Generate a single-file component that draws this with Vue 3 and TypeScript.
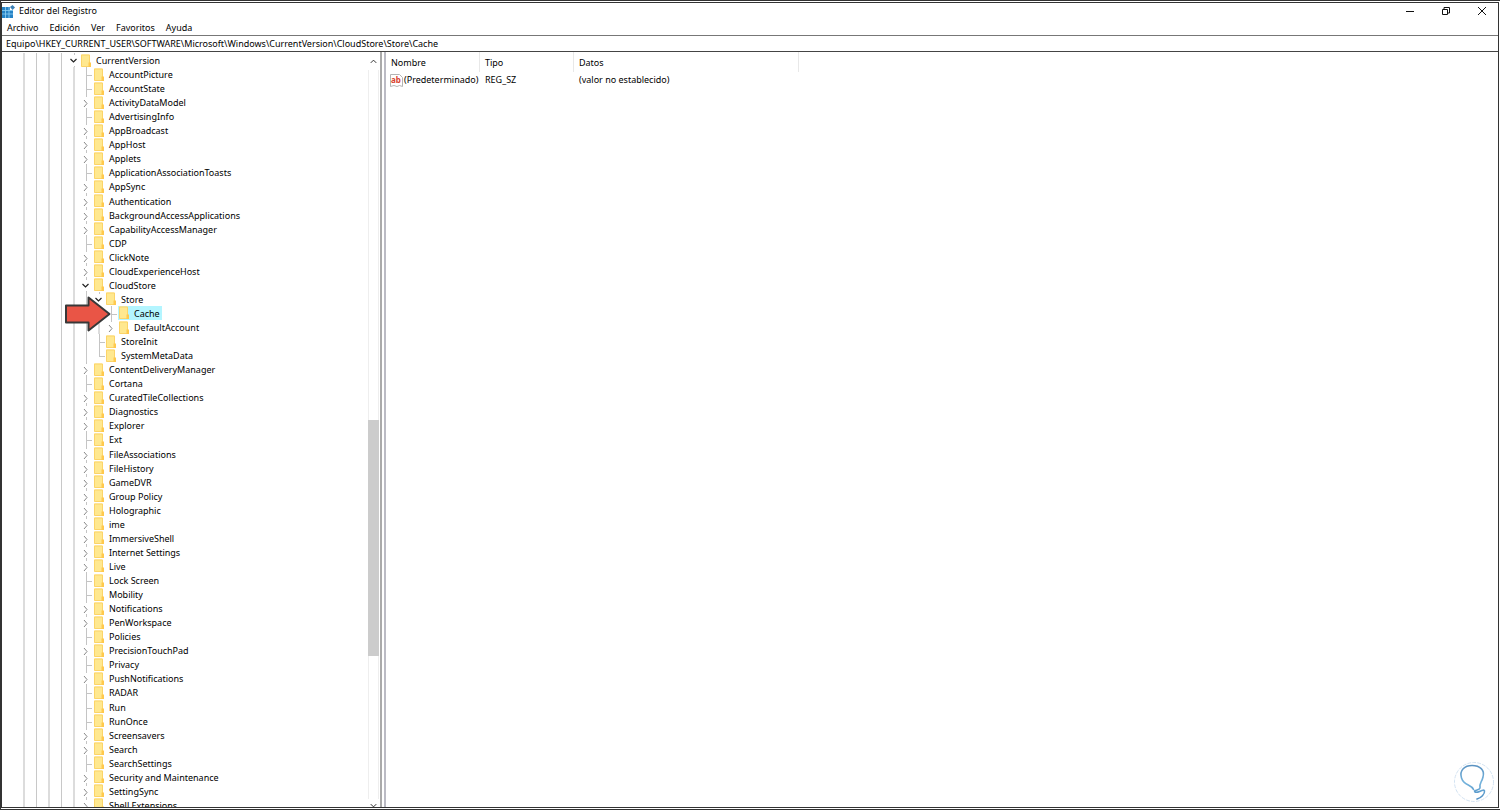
<script setup lang="ts">
type Kind = 'open' | 'closed' | 'leaf'
interface Key { name: string; level: number; kind: Kind; last?: boolean; selected?: boolean }

const menus = ['Archivo', 'Edición', 'Ver', 'Favoritos', 'Ayuda']
const path = 'Equipo\\HKEY_CURRENT_USER\\SOFTWARE\\Microsoft\\Windows\\CurrentVersion\\CloudStore\\Store\\Cache'

// A leading "+" marks a collapsed key that has children.
const before = ['AccountPicture', 'AccountState', '+ActivityDataModel', 'AdvertisingInfo', '+AppBroadcast', '+AppHost', '+Applets', 'ApplicationAssociationToasts', '+AppSync', '+Authentication', '+BackgroundAccessApplications', '+CapabilityAccessManager', 'CDP', '+ClickNote', '+CloudExperienceHost']
const after = ['+ContentDeliveryManager', 'Cortana', '+CuratedTileCollections', '+Diagnostics', '+Explorer', 'Ext', '+FileAssociations', '+FileHistory', '+GameDVR', '+Group Policy', '+Holographic', '+ime', '+ImmersiveShell', '+Internet Settings', '+Live', 'Lock Screen', 'Mobility', '+Notifications', '+PenWorkspace', 'Policies', '+PrecisionTouchPad', 'Privacy', '+PushNotifications', 'RADAR', 'Run', 'RunOnce', '+Screensavers', '+Search', 'SearchSettings', '+Security and Maintenance', '+SettingSync', '+Shell Extensions']
const toKey = (s: string): Key => ({ name: s.replace('+', ''), level: 1, kind: s.startsWith('+') ? 'closed' : 'leaf' })

const keys: Key[] = [
  { name: 'CurrentVersion', level: 0, kind: 'open' },
  ...before.map(toKey),
  { name: 'CloudStore', level: 1, kind: 'open' },
  { name: 'Store', level: 2, kind: 'open' },
  { name: 'Cache', level: 3, kind: 'leaf', selected: true },
  { name: 'DefaultAccount', level: 3, kind: 'closed', last: true },
  { name: 'StoreInit', level: 2, kind: 'leaf' },
  { name: 'SystemMetaData', level: 2, kind: 'leaf', last: true },
  ...after.map(toKey),
]
// Ancestor guides drawn to the left of each row
const guides = (k: Key) => 4 + k.level
</script>

<template>
  <div class="frame">
    <div class="window">
      <header class="titlebar">
        <svg class="app-icon" viewBox="0 0 13 13" aria-hidden="true">
          <path d="M0 2H8V5H11V13H0Z" fill="#2683c6" />
          <path d="M0 5.5H11M0 9H11M3.5 2V13M7 2V13" stroke="#8fd0f5" stroke-width=".8" />
          <path d="M8 2L10.5 0L13 2.5L10.5 5Z" fill="#3a7fb5" />
        </svg>
        <h1>Editor del Registro</h1>
        <div class="controls">
          <button type="button" aria-label="Minimizar"><svg viewBox="0 0 10 10"><path d="M1 5.5H9" /></svg></button>
          <button type="button" aria-label="Restaurar"><svg viewBox="0 0 10 10"><path d="M1.5 3.5H6.5V8.5H1.5ZM3 3.5V1.5H8.5V7H6.5" /></svg></button>
          <button type="button" aria-label="Cerrar"><svg viewBox="0 0 10 10"><path d="M1 1L9 9M9 1L1 9" /></svg></button>
        </div>
      </header>
      <nav class="menu"><button v-for="m in menus" :key="m" type="button">{{ m }}</button></nav>
      <input class="address" type="text" aria-label="Ruta" :value="path" />
      <main class="panes">
        <section class="tree-pane">
          <ul class="tree">
            <li v-for="(k, i) in keys" :key="i" class="row">
              <span v-for="g in guides(k)" :key="g" class="cell guide" :class="{ soft: g % 2 === 1 }"></span>
              <span class="cell node" :class="[k.kind, { last: k.last }]">
                <svg v-if="k.kind === 'open'" viewBox="0 0 12 14" class="chev dark"><path d="M2.500 6L5.500 9L8.500 6" /></svg>
                <svg v-else-if="k.kind === 'closed'" viewBox="0 0 12 14" class="chev"><path d="M4 5L7 8.500L4 12" /></svg>
              </span>
              <button type="button" class="label" :class="{ selected: k.selected }">
                <svg class="folder" viewBox="1 0 11 13" aria-hidden="true">
                  <path d="M1 .5H9.5V9H11V12.5H1Z" fill="#ffe88f" />
                  <path d="M1.500 1V12.500H10V9H9.500V1Z" fill="none" stroke="#fcd468" />
                  <path d="M8.500 8.500H11V13H8.500Z" fill="#ffc94d" />
                </svg>
                <span>{{ k.name }}</span>
              </button>
            </li>
          </ul>
          <svg class="pointer" viewBox="0 0 46 36" aria-hidden="true"><path d="M1 9.500H23.500V1.500L44.500 18L23.500 34.500V26.500H1Z" /></svg>
          <div class="scrollbar">
            <button type="button" aria-label="Subir"><svg viewBox="0 0 12 12"><path d="M3 7.500L6 4.500L9 7.500" /></svg></button>
            <div class="track"><div class="space-top"></div><div class="thumb"></div><div class="space-bottom"></div></div>
            <button type="button" class="down" aria-label="Bajar"><svg viewBox="0 0 12 12"><path d="M3 4.500L6 7.500L9 4.500" /></svg></button>
          </div>
        </section>
        <section class="values">
          <table>
            <colgroup><col class="c1" /><col class="c2" /><col class="c3" /><col /></colgroup>
            <thead><tr><th>Nombre</th><th>Tipo</th><th>Datos</th><td></td></tr></thead>
            <tbody><tr>
              <td class="first">
                <div class="name">
                  <svg class="ab" viewBox="0 0 13 13" aria-hidden="true"><path d="M.5 .5H9.500L12.500 3.500V12.500L9.500 11.500L7 12.500L4 11.500L.5 12.500Z" /><text x="1" y="9">ab</text></svg>
                  <span>(Predeterminado)</span>
                </div>
              </td>
              <td>REG_SZ</td><td>(valor no establecido)</td><td></td>
            </tr></tbody>
          </table>
        </section>
      </main>
    </div>
    <svg class="watermark" viewBox="0 0 40 42" aria-hidden="true">
      <defs><linearGradient id="bulb" x1="0" y1="0" x2="0" y2="1"><stop offset="0" stop-color="#5b93c2" /><stop offset=".5" stop-color="#74b3dc" /><stop offset="1" stop-color="#4f8fc4" /></linearGradient></defs>
      <circle cx="20" cy="21" r="19.500" />
      <path stroke="url(#bulb)" d="M19.500 28.500C17 23 10 25 7.500 17C5 9 11 4.500 18 4.500C26 4.500 31 9 29 16C28 21 25 22 26 27C26 29 19 29 21 31C23 33 30 27 30.500 30C31 33 27 37 23 38" />
    </svg>
  </div>
</template>

<style>
html, body, #app { height: 100%; }
body { margin: 0; }
</style>
<style scoped>
* { box-sizing: border-box; }
.frame { position: relative; height: 100%; padding: 1px 1px 1px 0; background: #fff; border: 1px solid #333; border-right: 0; font-family: "Noto Sans", "Open Sans", sans-serif; font-size: 9px; line-height: 14px; color: #000; overflow: hidden; }
.window { display: flex; flex-direction: column; height: 100%; border: 1px solid #333; }
button { border: 0; padding: 0; margin: 0; background: none; font: inherit; color: inherit; }
svg { display: block; flex: none; }
.titlebar { display: flex; align-items: center; height: 16px; flex: none; }
.app-icon { width: 13px; height: 13px; }
h1 { margin: 0 0 0 4px; font-size: 9px; font-weight: 400; flex: 1; }
.controls { display: flex; gap: 4px; }
.controls button { width: 32px; height: 16px; display: grid; place-items: center; }
.controls svg { width: 10px; height: 10px; fill: none; stroke: #111; }
.menu { display: flex; flex: none; gap: 11px; height: 16px; padding: 2px 0 0 5px; }
.address { flex: none; width: 100%; height: 17px; border: 0; border-top: 1px solid #777; border-bottom: 1px solid #444; padding: 0 4px; background: #fff; font: inherit; color: inherit; outline: 0; }
.panes { display: flex; flex: 1; min-height: 0; }
.tree-pane { position: relative; display: flex; width: 380px; flex: none; border-right: 2px solid #aaa; overflow: hidden; }
.tree { flex: 1; margin: 1px 0 -5px; padding: 0 0 0 16px; list-style: none; display: grid; grid-auto-rows: 1fr; }
.row { display: flex; min-height: 0; }
.cell { position: relative; width: 12px; flex: none; }
.cell:nth-child(even) { width: 13px; }
.guide { background: linear-gradient(#c8c8c8, #c8c8c8) 6px 0 / 1px 100% no-repeat; }
.guide.soft { background: linear-gradient(#dcdcdc, #dcdcdc) 5px 0 / 2px 100% no-repeat; }
.leaf { background: linear-gradient(#c4c4c4, #c4c4c4) 6px 0 / 1px 100% no-repeat, linear-gradient(#c4c4c4, #c4c4c4) 6px 8px / 6px 1px no-repeat; }
.leaf.last { background: linear-gradient(#c4c4c4, #c4c4c4) 6px 0 / 1px 8px no-repeat, linear-gradient(#c4c4c4, #c4c4c4) 6px 8px / 6px 1px no-repeat; }
.closed, .open { background: linear-gradient(#c4c4c4, #c4c4c4) 6px 0 / 1px 2px no-repeat, linear-gradient(#c4c4c4, #c4c4c4) 6px 100% / 1px 1px no-repeat; }
.closed.last { background: linear-gradient(#c4c4c4, #c4c4c4) 6px 0 / 1px 2px no-repeat; }
.label { display: flex; align-items: center; height: 14px; padding: 0 2px 0 1px; white-space: nowrap; }
.label span { padding-top: 2px; }
.label.selected { background: #b3f5ff; }
.folder { width: 11px; height: 13px; margin-right: 4px; }
.chev { width: 12px; height: 14px; fill: none; stroke: #888; }
.dark { stroke: #222; stroke-width: 1.2; }
.pointer { position: absolute; left: 63px; top: 244px; width: 46px; height: 36px; fill: #e95546; stroke: #383838; stroke-width: 2; stroke-linejoin: round; }
.scrollbar { display: flex; flex-direction: column; width: 11px; margin-right: 1px; }
.scrollbar button { height: 18px; display: grid; place-items: center; }
.scrollbar .down { height: 12px; margin-bottom: -4px; }
.scrollbar svg { width: 11px; height: 11px; fill: none; stroke: #222; }
.track { flex: 1; display: flex; flex-direction: column; }
.space-top { flex: 350; border: solid #eee; border-width: 0 1px; }
.thumb { flex: 236; background: #ccc; }
.space-bottom { flex: 143; border: solid #eee; border-width: 0 1px; }
.values { flex: 1; margin-left: 2px; border-left: 2px solid #bbbbc4; }
table { width: 100%; border-collapse: separate; border-spacing: 0; table-layout: fixed; }
.c1 { width: 94px; }
.c2 { width: 94px; }
.c3 { width: 225px; }
th, td { text-align: left; font-weight: 400; padding: 0 0 0 5px; white-space: nowrap; }
th { height: 20px; padding-top: 2px; border-right: 1px solid #e8e8e8; }
tbody td { height: 16px; }
.values .first { padding-left: 4px; }
.name { display: flex; align-items: center; gap: 1px; }
.ab { width: 13px; height: 13px; }
.ab path { fill: #fff; stroke: #b4b4b4; }
.ab text { font: bold 8px "Noto Sans", sans-serif; fill: #d9412e; }
.watermark { position: absolute; right: 6px; bottom: 6px; width: 40px; height: 42px; fill: none; stroke-width: 1.6; stroke-linecap: round; }
.watermark circle { stroke: #d3e3f2; stroke-width: 1; stroke-dasharray: 3 2; }
</style>
